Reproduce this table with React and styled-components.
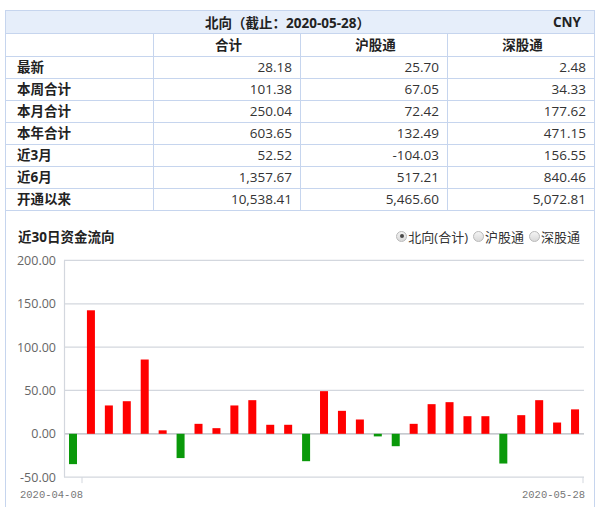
import React from 'react';
import styled, { createGlobalStyle } from 'styled-components';

const GlobalStyle = createGlobalStyle`
	html, body {
		margin: 0;
		padding: 0;
		background: #fff;
		overflow: hidden;
	}
	body {
		font-family: 'Open Sans', 'Noto Sans CJK SC', sans-serif;
		color: #333;
	}
`;

const LINE = '#c6d5ee';

const Frame = styled.div`
	margin: 10px 0 0 5px;
	width: 590px;
	box-sizing: border-box;
	border: 1px solid ${LINE};
	border-bottom: none;
`;

const TitleBar = styled.div`
	display: flex;
	align-items: center;
	height: 22px;
	background: #e6eefa;
	border-bottom: 1px solid ${LINE};
	font-size: 13.5px;
	font-weight: 700;
	color: #222;
`;

const TitleText = styled.div`
	flex: 1;
	text-align: center;
	padding-left: 16px;
`;

const Currency = styled.div`
	padding-right: 13px;
`;

const Grid = styled.div`
	display: grid;
	grid-template-columns: 148px 147px 147px 1fr;
`;

const Cell = styled.div`
	box-sizing: border-box;
	height: ${(p) => (p.$head ? 23 : 22)}px;
	line-height: ${(p) => (p.$head ? 22 : 21)}px;
	border-bottom: 1px solid ${LINE};
	border-right: ${(p) => (p.$last ? 'none' : `1px solid ${LINE}`)};
	font-size: 13.5px;
	padding: 0 8px 0 11px;
	white-space: nowrap;
	text-align: ${(p) => p.$align || 'left'};
	font-weight: ${(p) => (p.$bold ? 700 : 400)};
	color: ${(p) => (p.$bold ? '#222' : '#333')};
`;

const ChartHead = styled.div`
	display: flex;
	align-items: center;
	justify-content: space-between;
	height: 24px;
	padding: 13px 14px 2px 12px;
`;

const ChartTitle = styled.div`
	font-size: 13.5px;
	font-weight: 700;
	color: #222;
`;

const RadioGroup = styled.div`
	display: flex;
	align-items: center;
	font-size: 13px;
	color: #333;
`;

const RadioItem = styled.label`
	display: flex;
	align-items: center;
	margin-left: 5px;
`;

const RadioDot = styled.span`
	position: relative;
	width: 9px;
	height: 9px;
	border-radius: 50%;
	border: 1px solid #b9b9b9;
	background: linear-gradient(#f4f4f4, #d9d9d9);
	margin-right: 1px;
	&::after {
		content: '';
		display: ${(p) => (p.$on ? 'block' : 'none')};
		position: absolute;
		left: 2.5px;
		top: 2.5px;
		width: 4px;
		height: 4px;
		border-radius: 50%;
		background: #4a4a4a;
	}
`;

const ChartSvg = styled.svg`
	display: block;
`;

const rows = [
	['最新', '28.18', '25.70', '2.48'],
	['本周合计', '101.38', '67.05', '34.33'],
	['本月合计', '250.04', '72.42', '177.62'],
	['本年合计', '603.65', '132.49', '471.15'],
	['近3月', '52.52', '-104.03', '156.55'],
	['近6月', '1,357.67', '517.21', '840.46'],
	['开通以来', '10,538.41', '5,465.60', '5,072.81'],
];

const flows = [
	-35, 142.5, 32.7, 37.6, 85.7, 4, -28, 11.5, 6.5, 32.7, 38.8, 10.4, 10.4, -31.6, 49.2, 26.5, 16.5, -3,
	-14.3, 11.5, 34.2, 36.5, 20.3, 20.3, -34.3, 21.5, 38.8, 13, 28.18,
];

const ZERO = 183.8;
const UNIT = 0.8667;
const yOf = (v) => ZERO - v * UNIT;

function FlowChart() {
	const ticks = [200, 150, 100, 50, 0, -50];
	return (
		<ChartSvg width="588" height="257" viewBox="0 0 588 257">
			{ticks.map((t) => (
				<g key={t}>
					<line
						x1="58"
						x2="578"
						y1={yOf(t)}
						y2={yOf(t)}
						stroke={t === 0 ? '#b4b8bf' : '#d3d7de'}
						strokeWidth="1.2"
					/>
					<text
						x="50"
						y={yOf(t) + 4.5}
						textAnchor="end"
						fontFamily="'Open Sans', sans-serif"
						fontSize="12.5"
						fill="#666"
					>
						{t.toFixed(2)}
					</text>
				</g>
			))}
			<line x1="58.5" x2="58.5" y1={yOf(200)} y2={yOf(-50)} stroke="#d3d7de" strokeWidth="1.2" />
			<line x1="76" x2="76" y1={yOf(-50)} y2={yOf(-50) + 6} stroke="#d3d7de" />
			<line x1="577" x2="577" y1={yOf(-50)} y2={yOf(-50) + 6} stroke="#d3d7de" />
			{flows.map((v, i) => {
				const cx = 67 + i * 17.93;
				const top = v >= 0 ? yOf(v) : ZERO;
				return (
					<rect
						key={i}
						x={cx - 4}
						y={top}
						width="8"
						height={Math.abs(v) * UNIT}
						fill={v >= 0 ? '#ff0000' : '#0a990a'}
					/>
				);
			})}
			<text x="77" y="248" textAnchor="end" fontFamily="'Liberation Mono', monospace" fontSize="10.5" fill="#777">
				2020-04-08
			</text>
			<text x="579" y="248" textAnchor="end" fontFamily="'Liberation Mono', monospace" fontSize="10.5" fill="#777">
				2020-05-28
			</text>
		</ChartSvg>
	);
}

export default function App() {
	return (
		<>
			<GlobalStyle />
			<Frame>
				<TitleBar>
					<TitleText>北向（截止：2020-05-28）</TitleText>
					<Currency>CNY</Currency>
				</TitleBar>
				<Grid>
					<Cell $head />
					<Cell $head $bold $align="center">合计</Cell>
					<Cell $head $bold $align="center">沪股通</Cell>
					<Cell $head $bold $last $align="center">深股通</Cell>
					{rows.map((r) => (
						<React.Fragment key={r[0]}>
							<Cell $bold>{r[0]}</Cell>
							<Cell $align="right">{r[1]}</Cell>
							<Cell $align="right">{r[2]}</Cell>
							<Cell $align="right" $last>{r[3]}</Cell>
						</React.Fragment>
					))}
				</Grid>
				<ChartHead>
					<ChartTitle>近30日资金流向</ChartTitle>
					<RadioGroup>
						<RadioItem><RadioDot $on />北向(合计)</RadioItem>
						<RadioItem><RadioDot />沪股通</RadioItem>
						<RadioItem><RadioDot />深股通</RadioItem>
					</RadioGroup>
				</ChartHead>
				<FlowChart />
			</Frame>
		</>
	);
}
